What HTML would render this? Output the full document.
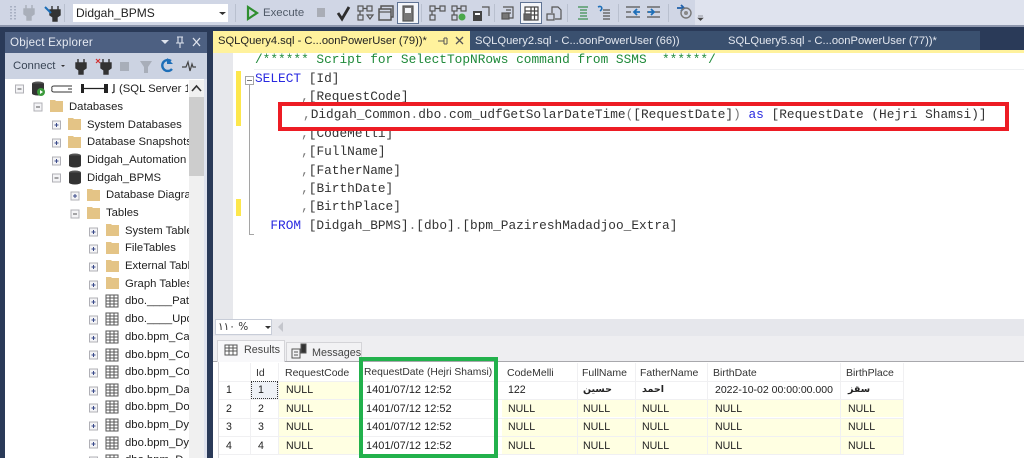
<!DOCTYPE html>
<html><head><meta charset="utf-8"><style>
html,body{margin:0;padding:0;background:#2a3a58;}
#p{position:relative;width:1024px;height:458px;overflow:hidden;background:#2a3a58;font-family:"Liberation Sans","DejaVu Sans",sans-serif;filter:blur(.35px);}
#p div,#p span.a{position:absolute;white-space:pre;}
.t{font-size:11.3px;color:#222;line-height:16px;height:16px;}
.c{font-family:"Liberation Mono",monospace;font-size:12.8px;line-height:18px;height:18px;color:#333;white-space:pre;left:255px;}
.k{color:#2a2ae0}.g{color:#777}.m{color:#1f8a3a}
.h{font-size:10.5px;color:#333;line-height:18px;height:18px;}
.v{font-size:10.6px;color:#222;line-height:18px;height:18px;}
.d{font-size:11px;color:#222;line-height:18px;height:18px;}
.y{background:#ffffe2;height:17px;}
.s{background:#b9c0cf;width:1px;}
</style></head><body><div id="p">
<div style="left:0;top:0;width:1024px;height:25px;background:#dfe3ee"></div>
<div style="left:0;top:0;width:695px;height:25px;background:#d0d6e5"></div>
<div style="left:0;top:25px;width:1024px;height:2px;background:#8e97ad"></div>
<div style="left:73px;top:4px;width:155px;height:18px;background:#fff"></div>
<div style="left:76px;top:4px;font-size:12px;line-height:18px;color:#222">Didgah_BPMS</div>
<div style="left:263px;top:4px;font-size:11.4px;line-height:18px;color:#505a68">Execute</div>
<div style="left:397px;top:2px;width:20px;height:20px;background:#f4f6fa;border:1px solid #5f7394"></div>
<div style="left:520px;top:2px;width:20px;height:20px;background:#f4f6fa;border:1px solid #5f7394"></div>
<div class="s" style="left:64px;top:4px;height:18px"></div><div class="s" style="left:235px;top:4px;height:18px"></div><div class="s" style="left:421px;top:4px;height:18px"></div><div class="s" style="left:494px;top:4px;height:18px"></div><div class="s" style="left:567px;top:4px;height:18px"></div><div class="s" style="left:618px;top:4px;height:18px"></div><div class="s" style="left:668px;top:4px;height:18px"></div>

<div style="left:5px;top:32px;width:202px;height:426px;background:#fff"></div>
<div style="left:5px;top:32px;width:202px;height:21px;background:#4d6082"></div>
<div style="left:10px;top:34px;font-size:11.6px;line-height:18px;color:#e6eaf2;letter-spacing:.2px">Object Explorer</div>
<div style="left:5px;top:53px;width:202px;height:26px;background:#ccd3e2"></div>
<div style="left:13px;top:58px;font-size:11.4px;line-height:17px;color:#3a4656">Connect</div>
<div style="left:189px;top:80px;width:15px;height:378px;background:#f0f0f0"></div>
<div style="left:189px;top:97px;width:15px;height:79px;background:#cdcdcd"></div>
<div style="left:204px;top:79px;width:3px;height:379px;background:#dfe3ee"></div>

<div class="t" style="left:119px;top:81px;width:69px;overflow:hidden">(SQL Server 15</div>
<div class="t" style="left:69px;top:99px">Databases</div>
<div class="t" style="left:87px;top:117px;width:102px;overflow:hidden">System Databases</div>
<div class="t" style="left:87px;top:134px;width:102px;overflow:hidden">Database Snapshots</div>
<div class="t" style="left:87px;top:152px;width:102px;overflow:hidden">Didgah_Automation</div>
<div class="t" style="left:87px;top:170px;width:102px;overflow:hidden">Didgah_BPMS</div>
<div class="t" style="left:106px;top:187px;width:83px;overflow:hidden">Database Diagrams</div>
<div class="t" style="left:106px;top:205px">Tables</div>
<div class="t" style="left:125px;top:223px;width:64px;overflow:hidden">System Tables</div>
<div class="t" style="left:125px;top:240px">FileTables</div>
<div class="t" style="left:125px;top:258px;width:64px;overflow:hidden">External Tables</div>
<div class="t" style="left:125px;top:276px;width:64px;overflow:hidden">Graph Tables</div>
<div class="t" style="left:125px;top:293px;width:64px;overflow:hidden">dbo.____Patch</div>
<div class="t" style="left:125px;top:311px;width:64px;overflow:hidden">dbo.____Update</div>
<div class="t" style="left:125px;top:329px;width:64px;overflow:hidden">dbo.bpm_Case</div>
<div class="t" style="left:125px;top:347px;width:64px;overflow:hidden">dbo.bpm_Code</div>
<div class="t" style="left:125px;top:364px;width:64px;overflow:hidden">dbo.bpm_Code</div>
<div class="t" style="left:125px;top:382px;width:64px;overflow:hidden">dbo.bpm_Data</div>
<div class="t" style="left:125px;top:399px;width:64px;overflow:hidden">dbo.bpm_Doc</div>
<div class="t" style="left:125px;top:417px;width:64px;overflow:hidden">dbo.bpm_Dyn</div>
<div class="t" style="left:125px;top:435px;width:64px;overflow:hidden">dbo.bpm_Dyn</div>
<div class="t" style="left:125px;top:452px;width:64px;overflow:hidden">dbo.bpm_D</div>

<div style="left:213px;top:31px;width:767px;height:19px;background:#3a506f"></div>
<div style="left:213px;top:31px;width:257px;height:19px;background:#fff29d"></div>
<div style="left:213px;top:50px;width:811px;height:3px;background:#fff29d"></div>
<div style="left:218px;top:32px;font-size:11.2px;line-height:18px;color:#222">SQLQuery4.sql - C...oonPowerUser (79))*</div>
<div style="left:475px;top:32px;font-size:11.2px;line-height:18px;color:#e4e8f0">SQLQuery2.sql - C...oonPowerUser (66))</div>
<div style="left:728px;top:32px;font-size:11.2px;line-height:18px;color:#e4e8f0">SQLQuery5.sql - C...oonPowerUser (77))*</div>

<div style="left:213px;top:53px;width:811px;height:267px;background:#fff"></div>
<div style="left:213px;top:53px;width:20px;height:267px;background:#e7e8ec"></div>
<div style="left:254px;top:53px;width:770px;height:16px;background:#fff;border-bottom:1px solid #eef0f2"></div>
<div style="left:236px;top:71px;width:5px;height:55px;background:#fde74c"></div>
<div style="left:236px;top:199px;width:5px;height:17px;background:#fde74c"></div>
<div style="left:249px;top:85px;width:1px;height:149px;background:#a5a5a5"></div>
<div style="left:249px;top:234px;width:5px;height:1px;background:#a5a5a5"></div>
<div style="left:245px;top:76px;width:7px;height:7px;background:#fff;border:1px solid #a5a5a5"></div>
<div style="left:247px;top:80px;width:5px;height:1px;background:#777"></div>

<div class="c m" style="top:51px">/****** Script for SelectTopNRows command from SSMS  ******/</div>
<div class="c" style="top:70px"><span class="k">SELECT</span> [Id]</div>
<div class="c" style="top:88px">      <span class="g">,</span>[RequestCode]</div>
<div class="c" style="top:125px">      <span class="g">,</span>[CodeMelli]</div>
<div class="c" style="top:143px">      <span class="g">,</span>[FullName]</div>
<div class="c" style="top:162px">      <span class="g">,</span>[FatherName]</div>
<div class="c" style="top:180px">      <span class="g">,</span>[BirthDate]</div>
<div class="c" style="top:198px">      <span class="g">,</span>[BirthPlace]</div>
<div class="c" style="top:217px">  <span class="k">FROM</span> [Didgah_BPMS]<span class="g">.</span>[dbo]<span class="g">.</span>[bpm_PazireshMadadjoo_Extra]</div>

<div style="left:278px;top:102px;width:723px;height:21px;border:4px solid #ed1c24;background:#fff"></div>
<div class="c" style="top:106px;left:303px"><span class="g">,</span>Didgah_Common<span class="g">.</span>dbo<span class="g">.</span>com_udfGetSolarDateTime<span class="g">(</span>[RequestDate]<span class="g">)</span> <span class="k">as</span> [RequestDate (Hejri Shamsi)]</div>

<div style="left:213px;top:319px;width:811px;height:17px;background:#e6e7ec"></div>
<div style="left:215px;top:319px;width:57px;height:16px;background:#fff;border:1px solid #c8cdd8;box-sizing:border-box"></div>
<div style="left:218px;top:319px;font-size:10.5px;line-height:16px;color:#333;font-family:'DejaVu Sans',sans-serif">۱۱۰ %</div>
<div style="left:213px;top:336px;width:811px;height:25px;background:#eeeef1"></div>
<div style="left:213px;top:361px;width:811px;height:1px;background:#a8a8ac"></div>
<div style="left:213px;top:362px;width:811px;height:96px;background:#fff"></div>
<div style="left:218px;top:362px;width:1px;height:96px;background:#d8d8dc"></div>
<div style="left:217px;top:340px;width:68px;height:22px;background:#f8f8fa;border:1px solid #d4d4d8;border-bottom:0;box-sizing:border-box"></div>
<div style="left:286px;top:342px;width:76px;height:19px;background:#f2f2f4;border:1px solid #d4d4d8;border-bottom:0;box-sizing:border-box"></div>
<div style="left:244px;top:342px;font-size:10.8px;line-height:16px;color:#444">Results</div>
<div style="left:312px;top:345px;font-size:10.8px;line-height:16px;color:#444">Messages</div>

<div class="h" style="left:256px;top:364px">Id</div>
<div class="h" style="left:285px;top:364px">RequestCode</div>
<div class="h" style="left:364px;top:364px;font-size:10.3px">RequestDate (Hejri Shamsi)</div>
<div class="h" style="left:507px;top:364px">CodeMelli</div>
<div class="h" style="left:582px;top:364px">FullName</div>
<div class="h" style="left:640px;top:364px">FatherName</div>
<div class="h" style="left:713px;top:364px">BirthDate</div>
<div class="h" style="left:846px;top:364px">BirthPlace</div>

<div class="y" style="left:279px;top:382px;width:80px"></div><div class="y" style="left:279px;top:400px;width:80px"></div><div class="y" style="left:279px;top:419px;width:80px"></div><div class="y" style="left:279px;top:437px;width:80px"></div>
<div class="y" style="left:502px;top:400px;width:401px"></div><div class="y" style="left:502px;top:419px;width:401px"></div><div class="y" style="left:502px;top:437px;width:401px"></div>
<div style="left:219px;top:381px;width:684px;height:1px;background:#f0f0f2"></div>
<div style="left:219px;top:399px;width:684px;height:1px;background:#f0f0f2"></div>
<div style="left:219px;top:418px;width:684px;height:1px;background:#f0f0f2"></div>
<div style="left:219px;top:436px;width:684px;height:1px;background:#f0f0f2"></div>
<div style="left:219px;top:454px;width:684px;height:1px;background:#f0f0f2"></div>
<div style="left:250px;top:363px;width:1px;height:92px;background:#f0f0f2"></div>
<div style="left:278px;top:363px;width:1px;height:92px;background:#f0f0f2"></div>
<div style="left:577px;top:363px;width:1px;height:92px;background:#f0f0f2"></div>
<div style="left:635px;top:363px;width:1px;height:92px;background:#f0f0f2"></div>
<div style="left:707px;top:363px;width:1px;height:92px;background:#f0f0f2"></div>
<div style="left:840px;top:363px;width:1px;height:92px;background:#f0f0f2"></div>
<div style="left:903px;top:363px;width:1px;height:92px;background:#f0f0f2"></div>
<div style="left:251px;top:381px;width:27px;height:18px;background:#eef1f6;border:1px dotted #333;box-sizing:border-box"></div>

<div class="v" style="left:226px;top:381px">1</div><div class="v" style="left:226px;top:400px">2</div><div class="v" style="left:226px;top:418px">3</div><div class="v" style="left:226px;top:437px">4</div>
<div class="v" style="left:258px;top:381px">1</div><div class="v" style="left:258px;top:400px">2</div><div class="v" style="left:258px;top:418px">3</div><div class="v" style="left:258px;top:437px">4</div>
<div class="v" style="left:286px;top:381px">NULL</div><div class="v" style="left:286px;top:400px">NULL</div><div class="v" style="left:286px;top:418px">NULL</div><div class="v" style="left:286px;top:437px">NULL</div>
<div class="d" style="left:366px;top:381px">1401/07/12 12:52</div><div class="d" style="left:366px;top:400px">1401/07/12 12:52</div><div class="d" style="left:366px;top:418px">1401/07/12 12:52</div><div class="d" style="left:366px;top:437px">1401/07/12 12:52</div>
<div class="v" style="left:508px;top:381px">122</div><div class="v" style="left:508px;top:400px">NULL</div><div class="v" style="left:508px;top:418px">NULL</div><div class="v" style="left:508px;top:437px">NULL</div>
<div class="v" style="left:583px;top:381px;font-family:'DejaVu Sans',sans-serif;font-weight:bold;font-size:9.5px">حسین</div><div class="v" style="left:583px;top:400px">NULL</div><div class="v" style="left:583px;top:418px">NULL</div><div class="v" style="left:583px;top:437px">NULL</div>
<div class="v" style="left:642px;top:381px;font-family:'DejaVu Sans',sans-serif;font-weight:bold;font-size:9.5px">احمد</div><div class="v" style="left:642px;top:400px">NULL</div><div class="v" style="left:642px;top:418px">NULL</div><div class="v" style="left:642px;top:437px">NULL</div>
<div class="v" style="left:715px;top:381px;font-size:10.5px">2022-10-02 00:00:00.000</div><div class="v" style="left:715px;top:400px">NULL</div><div class="v" style="left:715px;top:418px">NULL</div><div class="v" style="left:715px;top:437px">NULL</div>
<div class="v" style="left:848px;top:381px;font-family:'DejaVu Sans',sans-serif;font-weight:bold;font-size:9.5px">سقز</div><div class="v" style="left:848px;top:400px">NULL</div><div class="v" style="left:848px;top:418px">NULL</div><div class="v" style="left:848px;top:437px">NULL</div>

<div style="left:359px;top:357px;width:131px;height:93px;border:4px solid #22b14c"></div>

<svg style="position:absolute;left:0;top:0" width="1024" height="458" viewBox="0 0 1024 458">
<defs>
<g id="pl"><rect x="-4" y="-4" width="8" height="8" fill="#f4f4f6" stroke="#b0b0b6"/><path d="M-2 0H2M0-2V2" stroke="#3a4a8a" stroke-width="1"/></g>
<g id="mi"><rect x="-4" y="-4" width="8" height="8" fill="#f4f4f6" stroke="#b0b0b6"/><path d="M-2 0H2" stroke="#555"/></g>
<path id="fo" d="M0-6H5L6-5H13V6H0Z" fill="#e4c486"/>
<g id="db"><ellipse cx="6" cy="-4.5" rx="6" ry="2" fill="#555"/><rect x="0" y="-4.5" width="12" height="10" fill="#333"/><ellipse cx="6" cy="5.5" rx="6" ry="2" fill="#333"/></g>
<g id="tb"><rect x="0" y="-6" width="12" height="12" fill="#fff" stroke="#555"/><path d="M0-3H12M0 0H12M0 3H12M4-6V6M8-6V6" stroke="#555"/></g>
<g id="plug"><path d="M-3-7V-3M3-7V-3M-5-3H5V2L2 4V8H-2V4L-5 2Z" stroke="currentColor" fill="currentColor" stroke-width="1.4"/></g>
</defs>
<!-- toolbar -->
<path d="M11 6V20M15 6V20" stroke="#a8b0c2" stroke-width="2" stroke-dasharray="1.5 1.5"/>
<use href="#plug" x="29" y="12" color="#a9afba"/>
<use href="#plug" x="55" y="13" color="#333"/>
<path d="M45 7L51 13" stroke="#1e6fb8" stroke-width="2"/>
<path d="M219 12H226L222.500 15Z" fill="#333"/>
<path d="M248 7L257 13L248 19Z" fill="none" stroke="#2f8f2f" stroke-width="2.200"/>
<rect x="317" y="8" width="8" height="9" fill="#a9adb6"/>
<path d="M338 13L342 19L349 7" fill="none" stroke="#2e2e2e" stroke-width="2.800"/>
<g fill="none" stroke="#555" stroke-width="1.200"><rect x="358" y="6" width="5" height="5"/><rect x="367" y="6" width="5" height="5"/><path d="M363 8.500H367M360 11V15"/><rect x="358" y="15" width="5" height="5"/><path d="M367 15H373L370 19Z"/>
<rect x="381" y="6" width="12" height="11" stroke-width="1.500"/><rect x="379" y="9" width="12" height="11" fill="#d0d6e5" stroke-width="1.500"/><path d="M379 12H391"/>
<rect x="403" y="6" width="10" height="15" fill="#777" stroke="#555"/><rect x="405" y="8" width="6" height="5" fill="#f4f6fa" stroke="none"/>
<rect x="430" y="6" width="5" height="5"/><rect x="440" y="6" width="5" height="5"/><path d="M435 8.500H440M432 11V15"/><rect x="430" y="15" width="5" height="5"/>
<rect x="452" y="6" width="5" height="5"/><rect x="461" y="6" width="5" height="5"/><path d="M457 8.500H461M454 11V15"/><rect x="452" y="15" width="5" height="5"/></g>
<circle cx="462" cy="17" r="3.500" fill="#4aa84a"/>
<rect x="473" y="11" width="9" height="10" fill="#444"/><rect x="475" y="13" width="5" height="2" fill="#fff"/><path d="M482 7H489V16" fill="none" stroke="#555" stroke-width="1.200"/>
<g fill="none" stroke="#555" stroke-width="1.200"><path d="M503 7H513V18H509M506 10H511M506 13H511"/><rect x="502" y="13" width="7" height="6" fill="#777"/>
<rect x="525" y="7" width="13" height="13" fill="#fff" stroke="#444"/><path d="M525 11H538M525 15H538M531 7V20M534.500 7V20" stroke="#444"/><rect x="524" y="14" width="7" height="6" fill="#666"/>
<path d="M552 13V7H558L561 10V19H555"/><rect x="547" y="14" width="7" height="6"/>
<path d="M578 7H588M580 10H587M580 13H587M580 16H587M578 19H588" stroke="#3c8f50"/>
<path d="M603 10H610M603 13H610M603 16H610M603 19H610"/><path d="M598 7C602 5 603 9 600 11" stroke="#1e6fb8" stroke-width="1.600"/>
<path d="M626 12H631M626 7H640M626 17H640"/><path d="M640 12H634M637 9L634 12L637 15" stroke="#1e6fb8" stroke-width="1.800"/>
<path d="M647 12H652M647 7H660M654 12H660M647 17H660"/><path d="M648 12H654M651 9L654 12L651 15" stroke="#1e6fb8" stroke-width="1.800"/></g>
<path d="M677 8H684M681 5L684 8L681 11" fill="none" stroke="#1e5fa8" stroke-width="1.800"/><circle cx="686" cy="13" r="5" fill="none" stroke="#777" stroke-width="1.400"/><circle cx="686" cy="13" r="2" fill="#888"/>
<path d="M698 16H703M698 18H703L700.500 20.500Z" fill="#444" stroke="#444" stroke-width=".6"/>
<!-- OE header -->
<path d="M161 40H169L165 44Z" fill="#dfe4ee"/>
<path d="M177 37H183M178 37V43H182V37M176 43H184M180 43V48" stroke="#dfe4ee" fill="none" stroke-width="1.100"/>
<path d="M193 38L200 46M200 38L193 46" stroke="#dfe4ee" stroke-width="1.300"/>
<!-- OE toolbar -->
<path d="M61 65H65L63 67Z" fill="#333"/>
<use href="#plug" x="81" y="66" color="#333"/>
<use href="#plug" x="106" y="66" color="#333"/>
<path d="M96 59L100 63M100 59L96 63" stroke="#d03030" stroke-width="1.200"/>
<rect x="120" y="62" width="9" height="9" fill="#a8aeb9"/>
<path d="M140 61H152L148 67V73H144V67Z" fill="#a8aeb9"/>
<path d="M171 61A5.500 5.500 0 1 0 172 69" fill="none" stroke="#1e6fb8" stroke-width="2.400"/><path d="M167 58V64H173Z" fill="#1e6fb8"/>
<path d="M182 67H186L188 62L190 71L192 64L193 67H196" fill="none" stroke="#444" stroke-width="1.200"/>
<!-- server row -->
<use href="#mi" x="19.500" y="89"/>
<use href="#db" x="32" y="88"/>
<circle cx="41" cy="92" r="4" fill="#3b9a3b"/><path d="M40 90L43 92L40 94Z" fill="#fff"/>
<path d="M72 86H54Q51 86 52 89Q51 92 54 92H72" fill="none" stroke="#333" stroke-width="1"/><path d="M68 89H72" stroke="#333"/>
<rect x="81" y="84" width="3" height="9" fill="#222"/><path d="M84 88.500H104" stroke="#222" stroke-width="1.200"/><rect x="104" y="84" width="4" height="9" fill="#222"/><path d="M114 84V92L112 93" stroke="#222" stroke-width="1.200" fill="none"/>
<path d="M192 91L196.500 86L201 91" fill="none" stroke="#333" stroke-width="1.600"/>
<!-- tree icons -->
<use href="#mi" x="38" y="107"/><use href="#fo" x="50" y="106"/>
<use href="#pl" x="56.500" y="125"/><use href="#fo" x="68" y="124"/>
<use href="#pl" x="56.500" y="143"/><use href="#fo" x="68" y="142"/>
<use href="#pl" x="56.500" y="161"/><use href="#db" x="69" y="160"/>
<use href="#mi" x="56.500" y="178"/><use href="#db" x="69" y="177"/>
<use href="#pl" x="75" y="196"/><use href="#fo" x="87" y="195"/>
<use href="#mi" x="75" y="214"/><use href="#fo" x="87" y="213"/>
<use href="#pl" x="93.500" y="232"/><use href="#fo" x="106" y="230"/>
<use href="#pl" x="93.500" y="249"/><use href="#fo" x="106" y="248"/>
<use href="#pl" x="93.500" y="267"/><use href="#fo" x="106" y="266"/>
<use href="#pl" x="93.500" y="285"/><use href="#fo" x="106" y="283"/>
<use href="#pl" x="93.500" y="302"/><use href="#tb" x="106" y="301"/>
<use href="#pl" x="93.500" y="320"/><use href="#tb" x="106" y="319"/>
<use href="#pl" x="93.500" y="338"/><use href="#tb" x="106" y="337"/>
<use href="#pl" x="93.500" y="355"/><use href="#tb" x="106" y="355"/>
<use href="#pl" x="93.500" y="373"/><use href="#tb" x="106" y="372"/>
<use href="#pl" x="93.500" y="391"/><use href="#tb" x="106" y="390"/>
<use href="#pl" x="93.500" y="408"/><use href="#tb" x="106" y="407"/>
<use href="#pl" x="93.500" y="426"/><use href="#tb" x="106" y="425"/>
<use href="#pl" x="93.500" y="444"/><use href="#tb" x="106" y="443"/>
<use href="#pl" x="93.500" y="461"/><use href="#tb" x="106" y="461"/>
<!-- tab icons -->
<path d="M438 41H444M444 38V44M447 38V44M444 38H447M444 44H447" stroke="#555" fill="none" stroke-width="1"/>
<path d="M456 37L463 44M463 37L456 44" stroke="#555" stroke-width="1.300"/>
<!-- zoom bar -->
<path d="M265 326H271L268 329Z" fill="#333"/>
<path d="M283 322L278 327L283 332Z" fill="#c4c6cc"/>
<!-- results tabs -->
<g><rect x="225" y="345" width="12" height="10" fill="#fff" stroke="#555"/><path d="M225 348H237M225 351H237M229 345V355M233 345V355" stroke="#555"/></g>
<g fill="none" stroke="#555"><rect x="292" y="349" width="8" height="9"/><path d="M294 352H298M294 355H298"/><rect x="301" y="344" width="5" height="9" fill="#333"/></g>
</svg>
</div></body></html>
